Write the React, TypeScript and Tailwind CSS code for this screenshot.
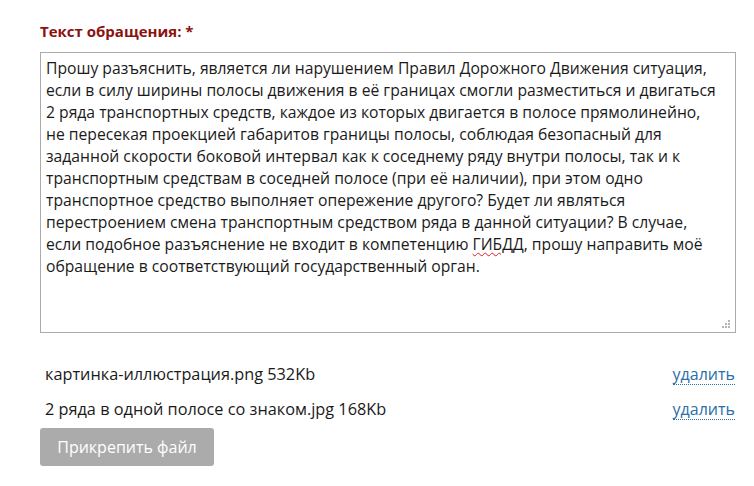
import React from "react";

const lines = [
  "Прошу разъяснить, является ли нарушением Правил Дорожного Движения ситуация,",
  "если в силу ширины полосы движения в её границах смогли разместиться и двигаться",
  "2 ряда транспортных средств, каждое из которых двигается в полосе прямолинейно,",
  "не пересекая проекцией габаритов границы полосы, соблюдая безопасный для",
  "заданной скорости боковой интервал как к соседнему ряду внутри полосы, так и к",
  "транспортным средствам в соседней полосе (при её наличии), при этом одно",
  "транспортное средство выполняет опережение другого? Будет ли являться",
  "перестроением смена транспортным средством ряда в данной ситуации? В случае,",
];

const files = [
  { name: "картинка-иллюстрация.png", size: "532Kb" },
  { name: "2 ряда в одной полосе со знаком.jpg", size: "168Kb" },
];

function ResizeGrip() {
  return (
    <svg className="absolute right-[4px] bottom-[3px]" width="10" height="10" viewBox="0 0 10 10" aria-hidden="true">
      <rect x="7" y="1" width="2" height="2" fill="#b5b5b5" />
      <rect x="4" y="4" width="2" height="2" fill="#b5b5b5" />
      <rect x="7" y="4" width="2" height="2" fill="#b5b5b5" />
      <rect x="1" y="7" width="2" height="2" fill="#b5b5b5" />
      <rect x="4" y="7" width="2" height="2" fill="#b5b5b5" />
      <rect x="7" y="7" width="2" height="2" fill="#b5b5b5" />
    </svg>
  );
}

export default function App() {
  return (
    <div className="min-h-screen bg-white pl-10 pr-[18px] pt-[20px] text-[#1a1a1a] font-['Open_Sans',sans-serif]">
      <div className="text-[15px] leading-[22px] font-bold text-[#8b1111] mb-[10px]">
        Текст обращения: *
      </div>

      <div className="relative h-[281px] border border-[#ababab] pl-[5px] pr-2 pt-[4px] text-[15.7px] leading-[22px]">
        {lines.map((line) => (
          <div key={line} className="whitespace-nowrap">
            {line}
          </div>
        ))}
        <div className="whitespace-nowrap">
          если подобное разъяснение не входит в компетенцию{" "}
          <span className="underline decoration-wavy decoration-[#e02020] decoration-1 underline-offset-2">
            ГИБДД
          </span>
          , прошу направить моё
        </div>
        <div className="whitespace-nowrap">обращение в соответствующий государственный орган.</div>
        <ResizeGrip />
      </div>

      <div className="mt-[24px] flex flex-col">
        {files.map((f) => (
          <div key={f.name} className="flex items-center justify-between h-[35px] pl-[5px] text-[16.3px]">
            <span>
              {f.name} {f.size}
            </span>
            <a
              href="#"
              className="text-[#2b6ea8] text-[16px] border-b border-dotted border-[#2b6ea8] leading-[20px] mr-[1px]"
            >
              удалить
            </a>
          </div>
        ))}
      </div>

      <button
        type="button"
        className="mt-[1px] h-[38px] w-[174px] rounded-[3px] bg-[#ababab] text-white text-[16px]"
      >
        Прикрепить файл
      </button>
    </div>
  );
}
